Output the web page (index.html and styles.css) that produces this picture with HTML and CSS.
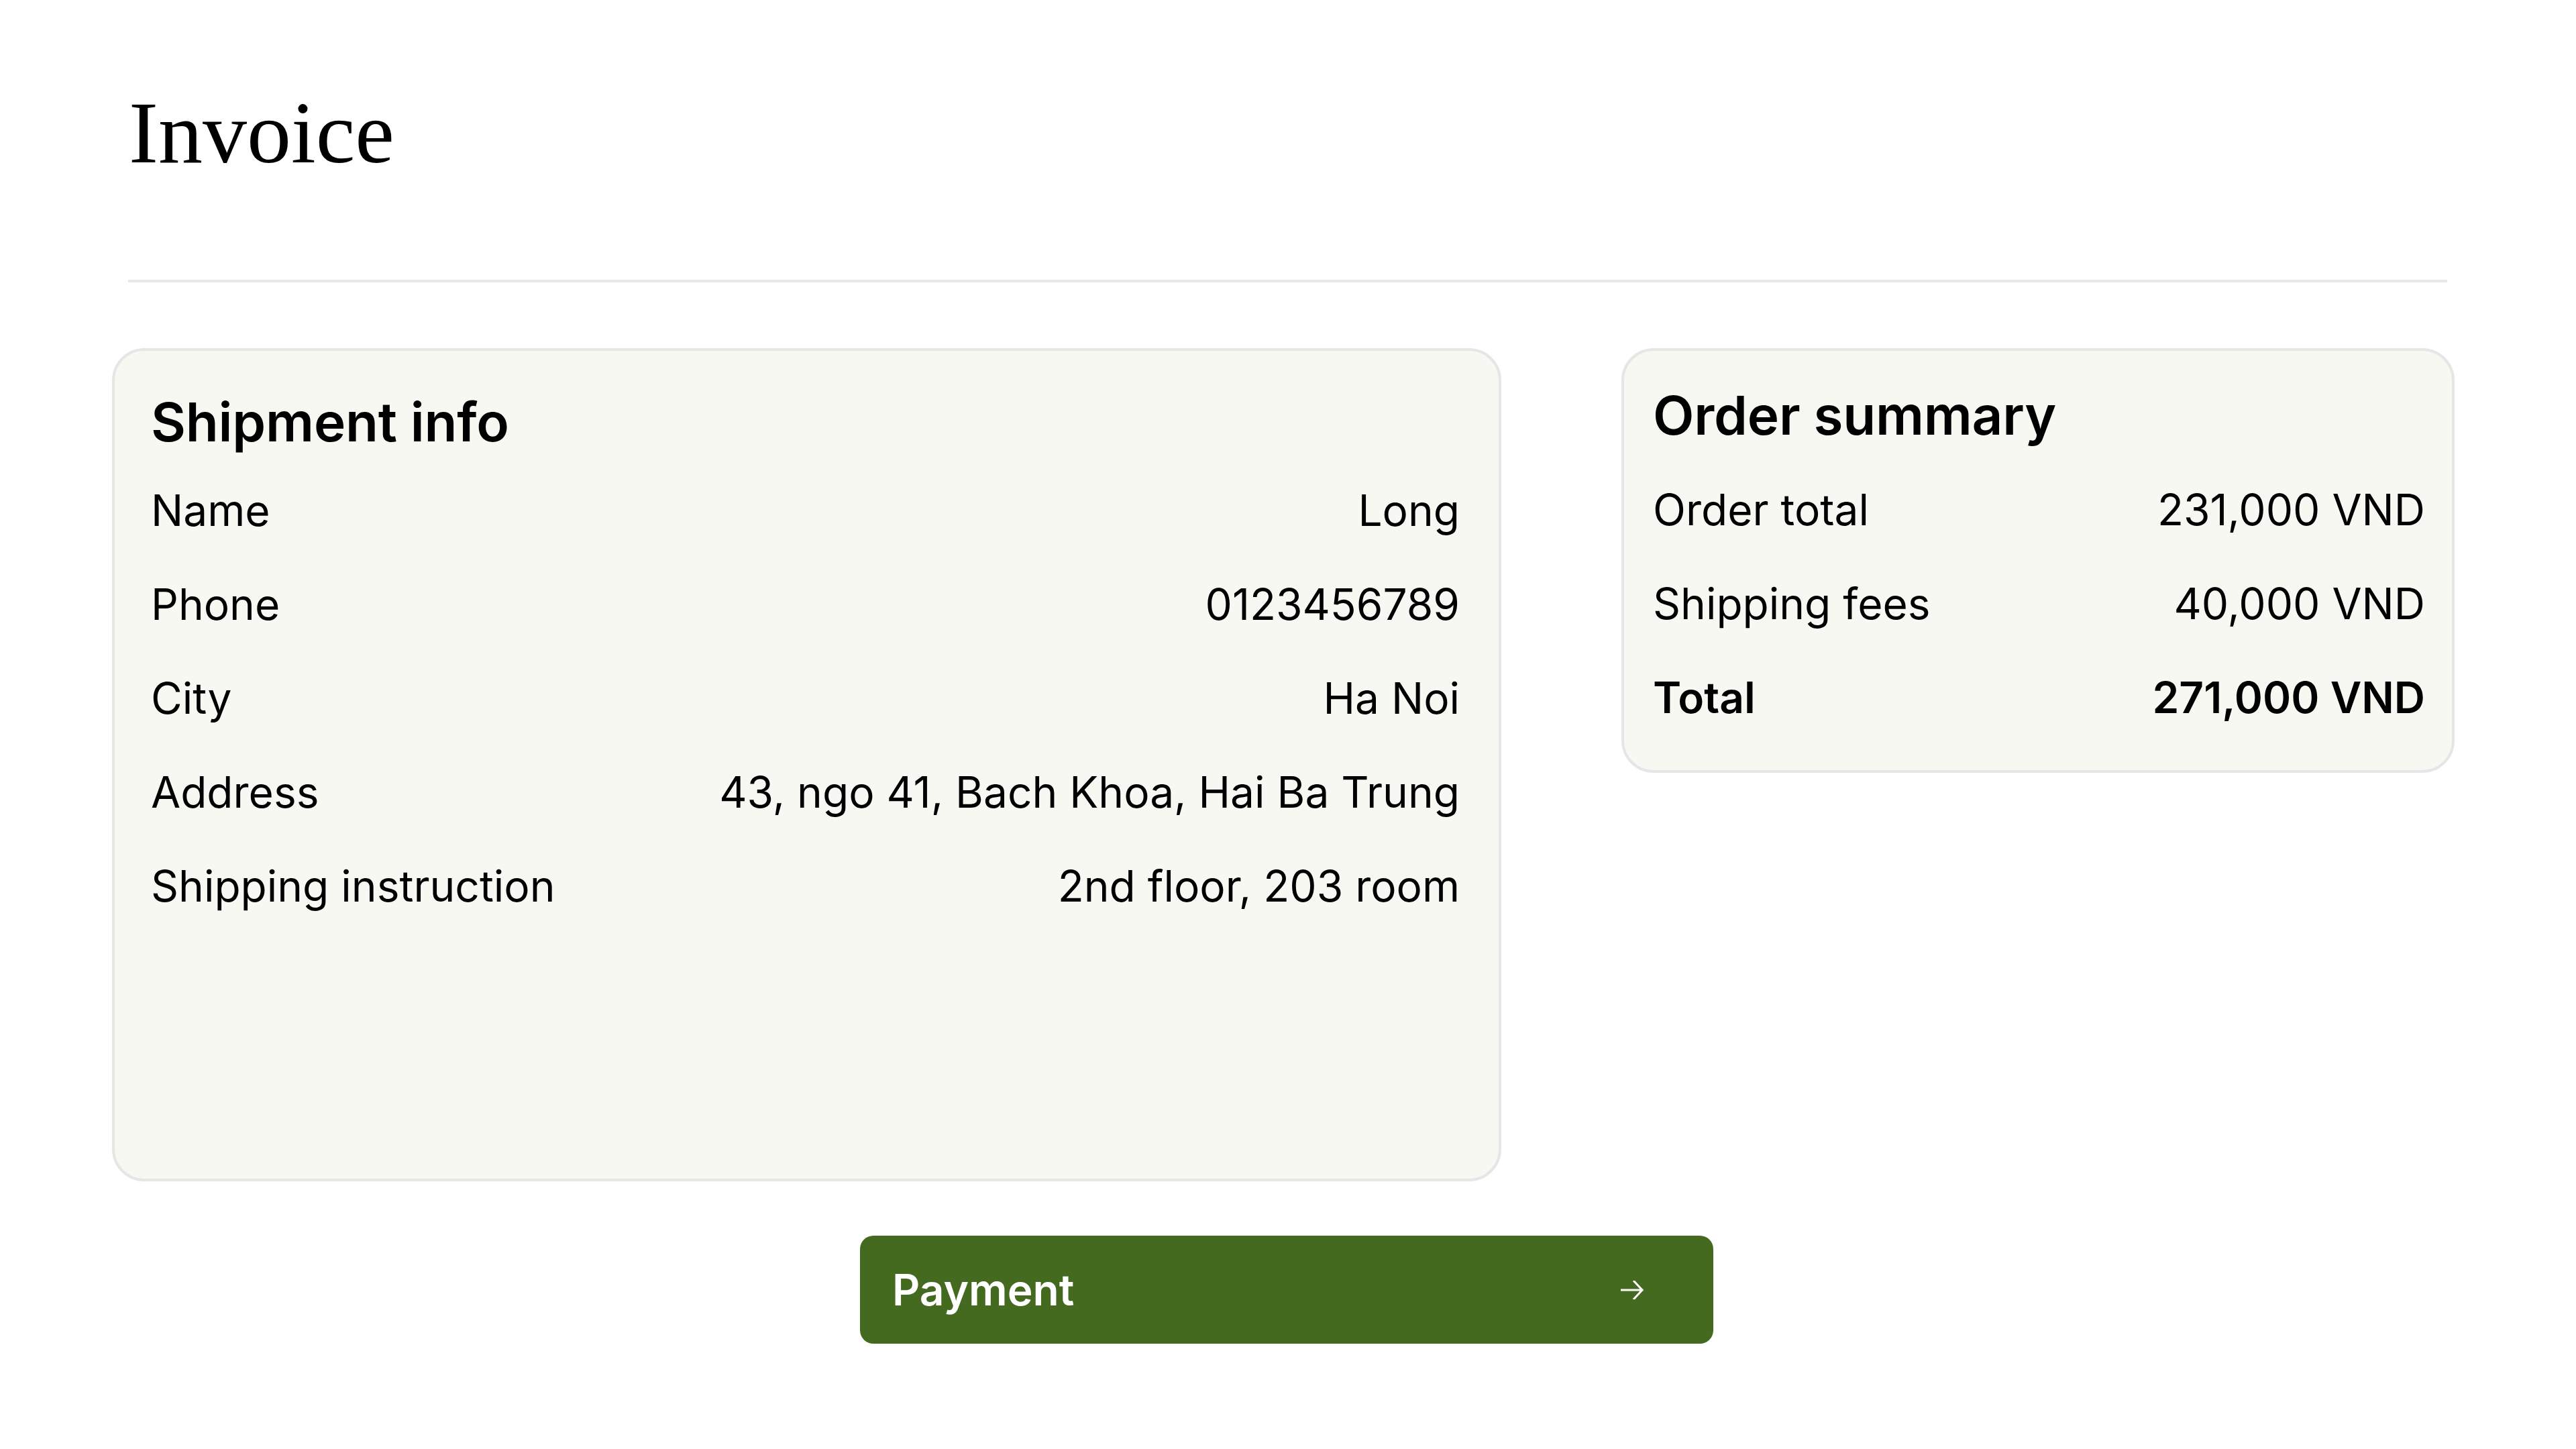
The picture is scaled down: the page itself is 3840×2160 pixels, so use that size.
FILE: index.html
```html
<!DOCTYPE html>
<html lang="en">
<head>
<meta charset="utf-8">
<title>Invoice</title>
<link rel="stylesheet" href="styles.css">
</head>
<body>
<div class="page">
  <header class="header">
    <h1 class="title">Invoice</h1>
  </header>
  <div class="divider"></div>
  <main class="cards">
    <section class="card card-shipment">
      <h2 class="card-title">Shipment info</h2>
      <div class="rows">
        <div class="row"><span>Name</span><span>Long</span></div>
        <div class="row"><span>Phone</span><span>0123456789</span></div>
        <div class="row"><span>City</span><span>Ha Noi</span></div>
        <div class="row"><span>Address</span><span>43, ngo 41, Bach Khoa, Hai Ba Trung</span></div>
        <div class="row"><span>Shipping instruction</span><span>2nd floor, 203 room</span></div>
      </div>
    </section>
    <section class="card card-summary">
      <h2 class="card-title">Order summary</h2>
      <div class="rows">
        <div class="row"><span>Order total</span><span>231,000 VND</span></div>
        <div class="row"><span>Shipping fees</span><span>40,000 VND</span></div>
        <div class="row row-total"><span>Total</span><span>271,000 VND</span></div>
      </div>
    </section>
  </main>
  <div class="actions">
    <button class="pay-button" type="button">
      <span class="pay-label">Payment</span>
      <svg class="pay-arrow" width="34" height="28" viewBox="0 0 34 28" aria-hidden="true">
        <path d="M0 14 H32 M20 1 L32 14 L20 27" fill="none" stroke="#ffffff" stroke-width="3" stroke-linecap="square" stroke-linejoin="miter"/>
      </svg>
    </button>
  </div>
</div>
</body>
</html>
```

FILE: styles.css
```css
html, body {
  margin: 0;
  padding: 0;
  background: #ffffff;
}

body {
  font-family: Inter, "Noto Sans", "Liberation Sans", sans-serif;
  color: #000000;
}

.page {
  width: 3840px;
  height: 2160px;
  box-sizing: border-box;
  padding-top: 110px;
}

.header {
  padding: 0 192px;
}

.title {
  margin: 0;
  font-family: "Liberation Serif", "Times New Roman", serif;
  font-weight: 400;
  font-size: 132px;
  line-height: 176px;
  height: 176px;
}

.divider {
  margin: 131px 192px 0 191px;
  height: 4px;
  background: #e7e7e7;
}

.cards {
  display: flex;
  align-items: flex-start;
  gap: 179px;
  padding: 0 181px 0 167px;
  margin-top: 98px;
}

.card {
  box-sizing: border-box;
  background: #f8f8f3;
  border: 4px solid #e6e6e6;
  border-radius: 48px;
}

.card-shipment {
  width: 2071px;
  min-height: 1242px;
  padding: 56px 58px 56px 54px;
}

.card-summary {
  width: 1242px;
  padding: 46px 40px 68px 43px;
}

.card-title {
  margin: 0;
  font-size: 80px;
  font-weight: 600;
  line-height: 100px;
  letter-spacing: -0.2px;
}

.rows {
  display: flex;
  flex-direction: column;
  gap: 60px;
}

.card-shipment .rows {
  margin-top: 42px;
}

.card-summary .rows {
  margin-top: 51px;
}

.row {
  display: flex;
  justify-content: space-between;
  align-items: baseline;
  font-size: 64px;
  line-height: 80px;
  font-weight: 400;
}

.row-total {
  font-weight: 600;
}

.actions {
  display: flex;
  justify-content: center;
  margin-top: 81px;
}

.pay-button {
  box-sizing: border-box;
  width: 1272px;
  height: 161px;
  margin-left: -4px;
  display: flex;
  align-items: center;
  justify-content: space-between;
  padding: 0 104px 0 48px;
  background: #446a20;
  border: none;
  border-radius: 20px;
  color: #ffffff;
  font-family: Inter, "Noto Sans", "Liberation Sans", sans-serif;
  font-size: 64px;
  font-weight: 600;
  cursor: pointer;
}

.pay-label {
  line-height: 80px;
}

.pay-arrow {
  display: block;
}
```
